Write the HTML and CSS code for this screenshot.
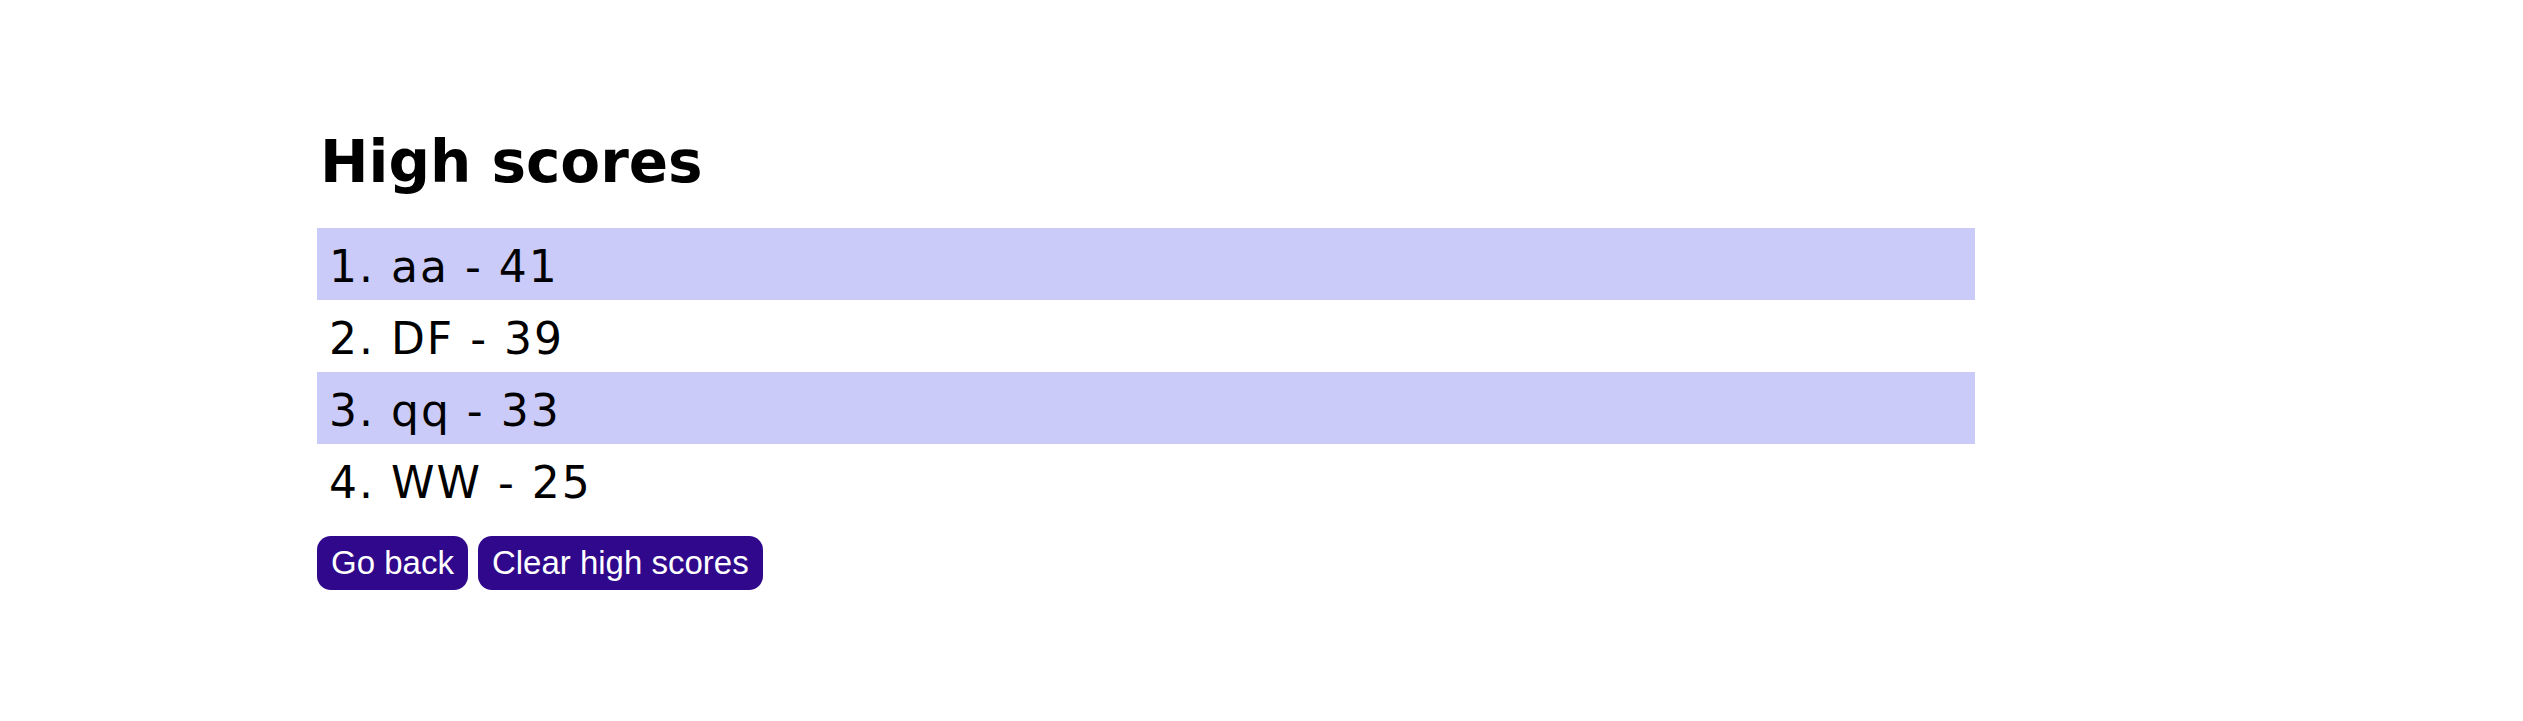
FILE: index.html
```html
<!DOCTYPE html>
<html>
<head>
<meta charset="utf-8">
<link rel="stylesheet" href="styles.css">
</head>
<body>
<main class="page">
  <h1 class="title">High scores</h1>
  <ol class="scores">
    <li class="score">1. aa - 41</li>
    <li class="score">2. DF - 39</li>
    <li class="score">3. qq - 33</li>
    <li class="score">4. WW - 25</li>
  </ol>
  <div class="actions">
    <button class="btn">Go back</button>
    <button class="btn">Clear high scores</button>
  </div>
</main>
</body>
</html>
```

FILE: styles.css
```css
html, body {
  margin: 0;
  padding: 0;
  background: #ffffff;
}
.page {
  display: flex;
  flex-direction: column;
  margin-left: 317px;
  width: 1658px;
  padding-top: 128px;
  font-family: "DejaVu Sans", Verdana, sans-serif;
  color: #000;
}
.title {
  margin: 0 0 32px 0;
  padding-left: 3px;
  font-size: 58px;
  font-weight: bold;
  line-height: 68px;
}
.scores {
  list-style: none;
  margin: 0;
  padding: 0;
  display: flex;
  flex-direction: column;
}
.score {
  box-sizing: border-box;
  height: 72px;
  padding: 6px 0 0 12px;
  line-height: 66px;
  font-size: 44px;
  letter-spacing: 2px;
}
.score:nth-child(odd) {
  background: #cbcbfa;
}
.actions {
  display: flex;
  gap: 10px;
  margin-top: 20px;
}
.btn {
  height: 54px;
  line-height: 54px;
  padding: 0 14px;
  border: none;
  border-radius: 14px;
  background: #2f088c;
  color: #ffffff;
  font-family: "Liberation Sans", Arial, sans-serif;
  font-size: 33px;
}
```
